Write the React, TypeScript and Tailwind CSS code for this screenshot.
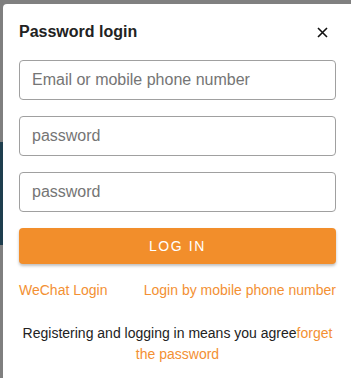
import React from "react";

export default function App() {
  return (
    <div
      className="w-[351px] h-[378px] overflow-hidden bg-[#808080] flex"
      style={{ fontFamily: '"Liberation Sans", Arial, sans-serif' }}
    >
      <div className="w-[3px] shrink-0 flex flex-col">
        <div className="h-[142px] bg-[#7f7f7f]" />
        <div className="h-[103px] bg-[#1e3e4e]" />
        <div className="flex-1 bg-[#7f7f7f]" />
      </div>
      <div className="mt-[4px] flex-1 bg-white rounded-tl-[4px] pl-4 pr-[15px] pt-4 flex flex-col">
        <div className="flex items-center justify-between h-6">
          <span className="text-[16px] font-bold text-[#222]">Password login</span>
          <svg width="11" height="11" viewBox="0 0 11 11" className="mr-[8px]">
            <path d="M1 1 L10 10 M10 1 L1 10" stroke="#111" strokeWidth="1.6" />
          </svg>
        </div>
        <div className="mt-4 flex flex-col gap-4">
          {["Email or mobile phone number", "password", "password"].map((p, i) => (
            <input
              key={i}
              placeholder={p}
              className="h-[40px] w-full border border-[#a0a0a0] rounded-[4px] px-3 text-[16px] placeholder:text-[#757575] outline-none"
            />
          ))}
          <button className="h-[36px] w-full rounded-[4px] bg-[#f28e2b] text-white text-[14px] tracking-[1.6px] shadow-[0_2px_3px_rgba(0,0,0,0.25)]">
            LOG IN
          </button>
        </div>
        <div className="mt-4 flex justify-between text-[14px] leading-5 text-[#f39033]">
          <span>WeChat Login</span>
          <span>Login by mobile phone number</span>
        </div>
        <p className="mt-[23px] text-center text-[14px] leading-[21px] text-[#222] -mx-1">
          Registering and logging in means you agree<span className="text-[#f39033]">forget the password</span>
        </p>
      </div>
    </div>
  );
}
